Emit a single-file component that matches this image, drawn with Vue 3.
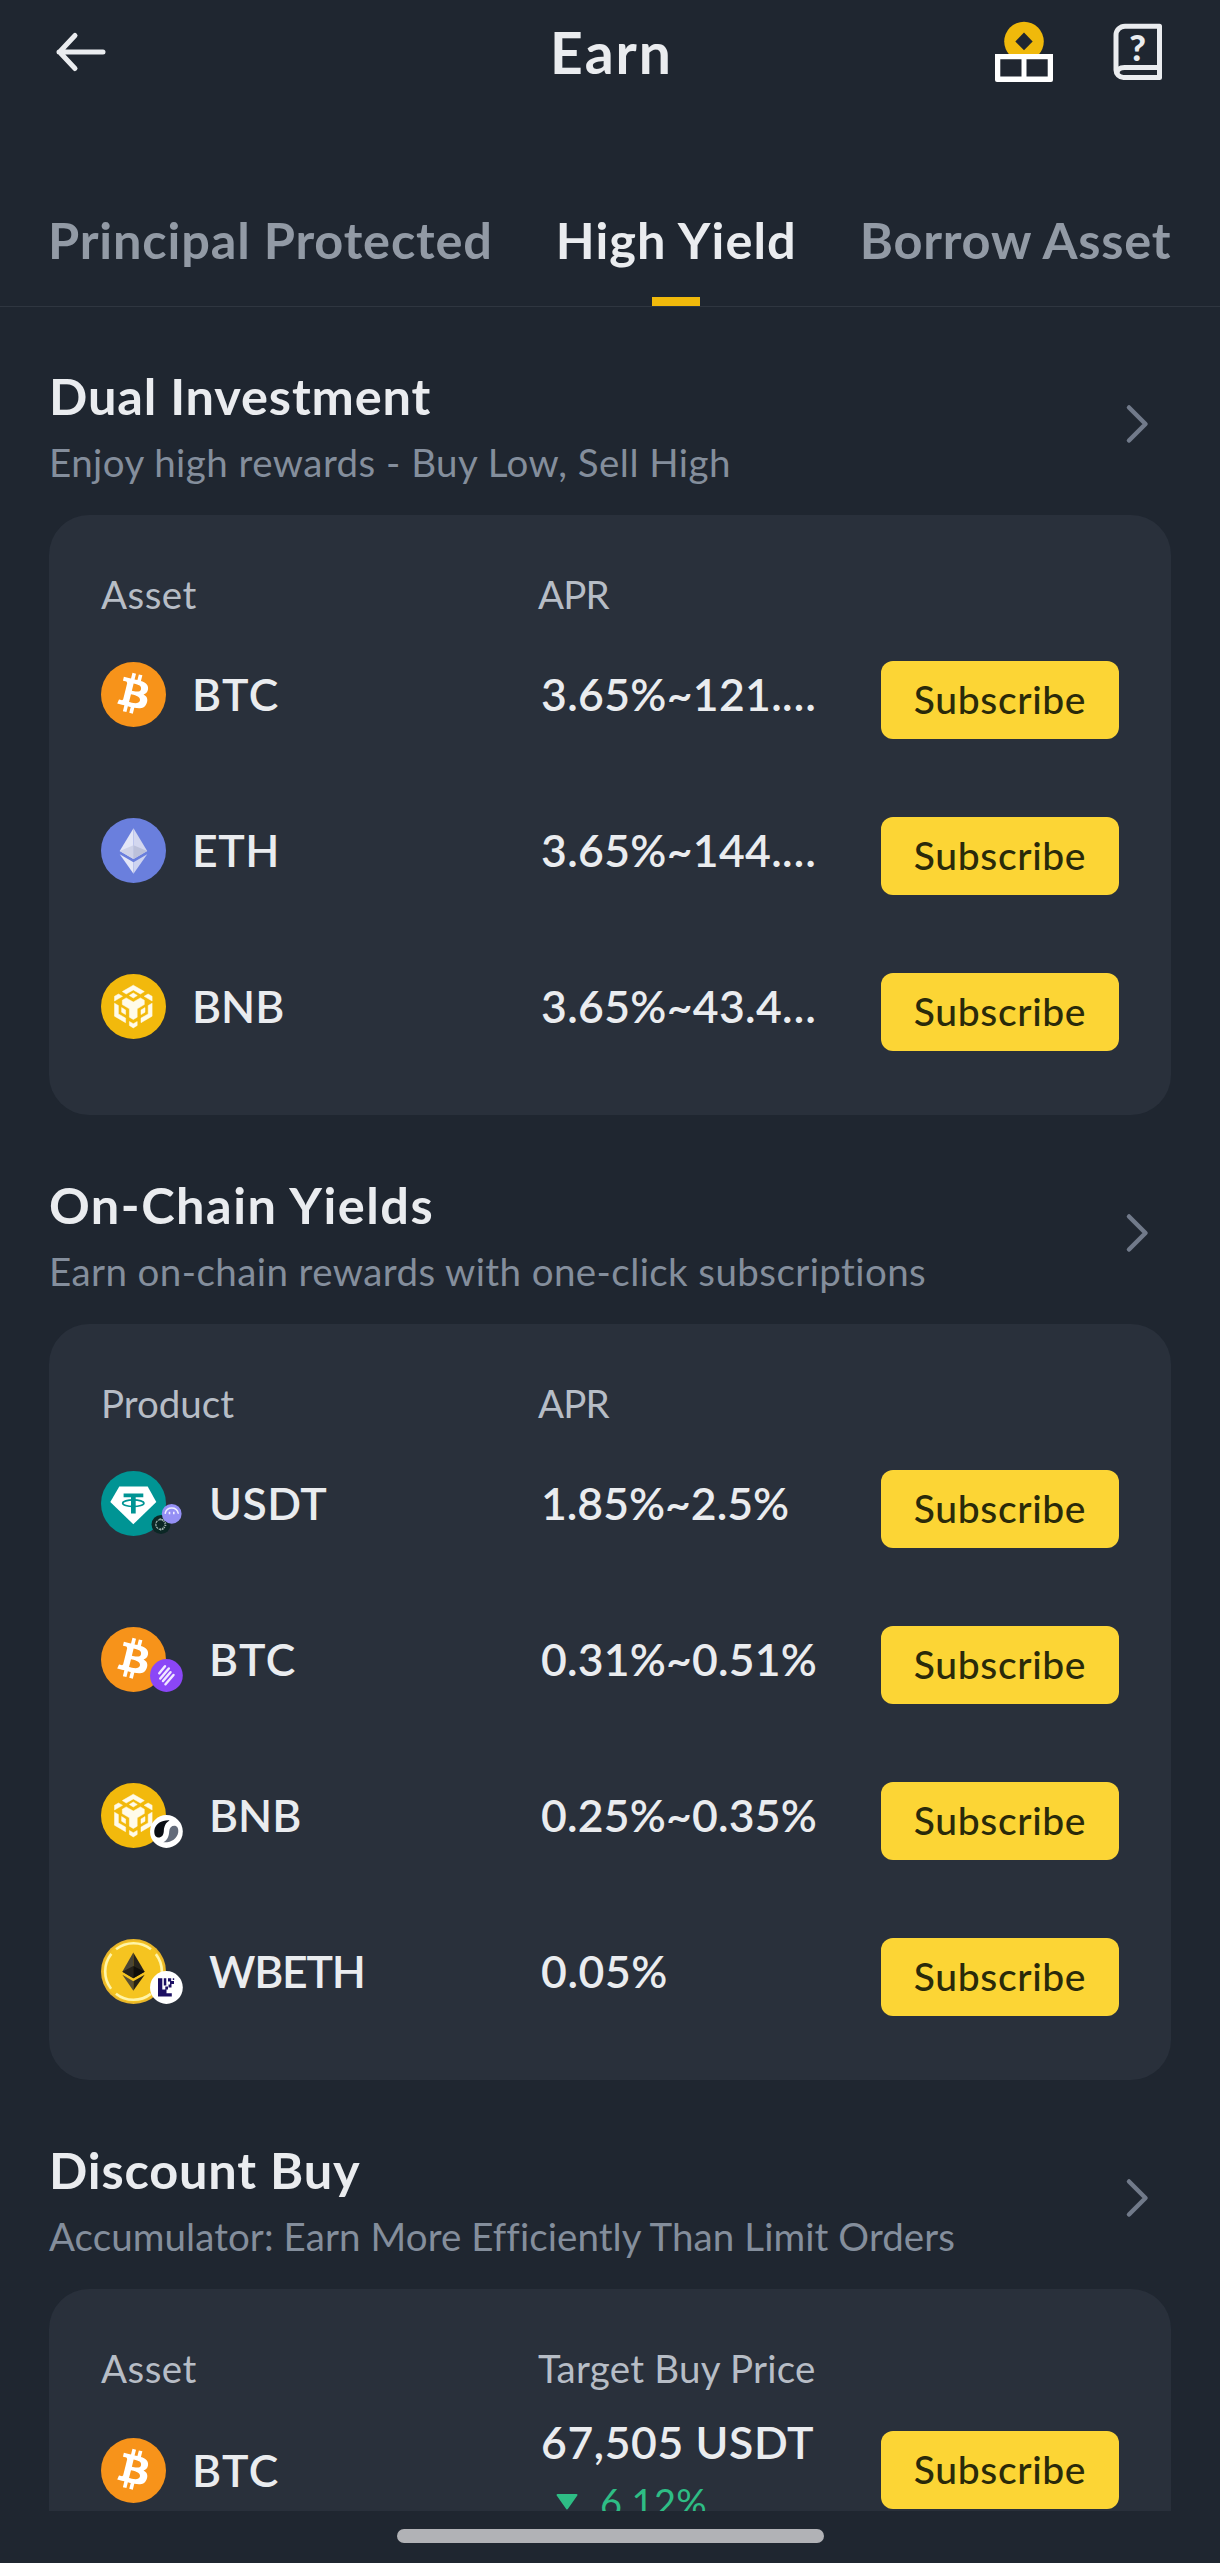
<script setup>
const tabs = [
  { label: 'Principal Protected', ls: 0.84 },
  { label: 'High Yield', ls: 1.04, active: true },
  { label: 'Borrow Asset', ls: 0.75 },
]

const sections = [
  {
    title: 'Dual Investment', ls: 0.84,
    sub: 'Enjoy high rewards - Buy Low, Sell High', subLs: 0.46,
    head: ['Asset', 'APR'], headLs: [0.47, -0.9],
    rows: [
      { icon: 'btc', name: 'BTC', nameLs: 1.5, value: '3.65%~121.…', ls: 0.33 },
      { icon: 'eth', name: 'ETH', nameLs: 0.5, value: '3.65%~144.…', ls: 0.33 },
      { icon: 'bnb', name: 'BNB', nameLs: 0, value: '3.65%~43.4…', ls: 0.33 },
    ],
  },
  {
    title: 'On-Chain Yields', ls: 1.5,
    sub: 'Earn on-chain rewards with one-click subscriptions', subLs: 0.42,
    head: ['Product', 'APR'], headLs: [0, -0.9], badged: true,
    rows: [
      { icon: 'usdt', name: 'USDT', nameLs: 0.5, value: '1.85%~2.5%', ls: 0 },
      { icon: 'btc', badge: 'solv', name: 'BTC', nameLs: 1.5, value: '0.31%~0.51%', ls: 0.2 },
      { icon: 'bnb', badge: 'lista', name: 'BNB', nameLs: 0, value: '0.25%~0.35%', ls: 0.2 },
      { icon: 'wbeth', badge: 'layer', name: 'WBETH', nameLs: -1.2, value: '0.05%', ls: 0.6 },
    ],
  },
  {
    title: 'Discount Buy', ls: 0.83,
    sub: 'Accumulator: Earn More Efficiently Than Limit Orders', subLs: 0.08,
    head: ['Asset', 'Target Buy Price'], headLs: [0.47, 0.24], tall: true,
    rows: [
      { icon: 'btc', name: 'BTC', nameLs: 1.5, value: '67,505 USDT', ls: 0.6, change: '6.12%' },
    ],
  },
]

const spacing = (v) => ({ letterSpacing: v + 'px' })
</script>

<template>
  <div class="screen">
    <header class="topbar">
      <svg class="back" width="54" height="44" viewBox="0 0 54 44">
        <path d="M50 22H6M22 5.500L6.500 22L22 38.500" />
      </svg>
      <h1>Earn</h1>
      <div class="actions">
        <svg width="58" height="62" viewBox="0 0 58 62">
          <circle cx="29" cy="20.500" r="19.800" fill="#f0b90b" />
          <path d="M29 11.500L37.700 20.500L29 29.300L20.300 20.500Z" fill="#202630" />
          <path d="M0 33H58V59a2 2 0 0 1-2 2H2a2 2 0 0 1-2-2Z" fill="#fff" />
          <path d="M5.300 38.300H26.500V55.500H5.300ZM31.500 38.300H52.700V55.500H31.500Z" fill="#202630" />
        </svg>
        <svg width="50" height="58" viewBox="0 0 50 58">
          <g fill="none" stroke="#eaecef" stroke-width="5" stroke-linejoin="round">
            <path d="M46.500 3.200H12a9 9 0 0 0-9 9V47a7.500 7.500 0 0 0 7.500 7.500H46.500Z" />
            <path d="M46.500 44.500H11.500Q4.500 44.500 4 50" />
          </g>
          <text x="24.500" y="37.500" text-anchor="middle">?</text>
        </svg>
      </div>
    </header>

    <nav class="tabs">
      <div v-for="t in tabs" :key="t.label" class="tab" :class="{ active: t.active }" :style="spacing(t.ls)">{{ t.label }}</div>
    </nav>

    <main class="content">
      <section v-for="s in sections" :key="s.title" class="section">
        <div class="section-head">
          <div>
            <h2 :style="spacing(s.ls)">{{ s.title }}</h2>
            <p :style="spacing(s.subLs)">{{ s.sub }}</p>
          </div>
          <svg class="chevron" width="26" height="42" viewBox="0 0 26 42">
            <path d="M4 4.500L20.500 21L4 37.500" />
          </svg>
        </div>

        <div class="card" :class="{ badged: s.badged, tall: s.tall }">
          <div class="row labels">
            <span :style="spacing(s.headLs[0])">{{ s.head[0] }}</span>
            <span :style="spacing(s.headLs[1])">{{ s.head[1] }}</span>
          </div>
          <div v-for="r in s.rows" :key="r.name" class="row item">
            <div class="asset">
              <svg class="coin" :width="s.badged ? 82 : 65" height="65" :viewBox="s.badged ? '0 0 82 65' : '0 0 65 65'">
                <template v-if="r.icon === 'btc'">
                  <circle cx="32.500" cy="32.500" r="32.500" fill="#f7931a" />
                  <path transform="translate(-.5 -1.500) scale(2.050)" fill="#fff" d="M23.189 14.02c.314-2.096-1.283-3.223-3.465-3.975l.708-2.84-1.728-.43-.69 2.765c-.454-.114-.92-.22-1.385-.326l.695-2.783L15.596 6l-.708 2.839c-.376-.086-.746-.17-1.104-.26l.002-.009-2.384-.595-.46 1.846s1.283.294 1.256.312c.7.175.826.638.805 1.006l-.806 3.235c.048.012.11.03.18.057l-.183-.045-1.13 4.532c-.086.212-.303.531-.793.41.018.025-1.256-.313-1.256-.313l-.858 1.978 2.25.561c.418.105.828.215 1.231.318l-.715 2.872 1.727.43.708-2.84c.472.127.93.245 1.378.357l-.706 2.828 1.728.43.715-2.866c2.948.558 5.164.333 6.097-2.333.752-2.146-.037-3.385-1.588-4.192 1.13-.26 1.98-1.003 2.207-2.538zm-3.95 5.538c-.533 2.147-4.148.986-5.32.695l.95-3.805c1.172.293 4.929.872 4.37 3.11zm.535-5.569c-.487 1.953-3.495.96-4.47.717l.86-3.45c.975.243 4.118.696 3.61 2.733z" />
                </template>
                <template v-else-if="r.icon === 'eth'">
                  <circle cx="32.500" cy="32.500" r="32.500" fill="#6a7fdd" />
                  <path d="M32.500 10.300L18.700 33L32.500 41Z" fill="#e3e6f7" />
                  <path d="M32.500 10.300L46.200 33L32.500 41Z" fill="#d3d7ef" />
                  <path d="M32.500 27.200L18.700 33L32.500 41Z" fill="#ced2e8" />
                  <path d="M32.500 27.200L46.200 33L32.500 41Z" fill="#bcc1da" />
                  <path d="M18.700 36.300L32.500 44.300V55.700Z" fill="#e3e6f7" />
                  <path d="M46.200 36.300L32.500 44.300V55.700Z" fill="#cdd3f0" />
                </template>
                <template v-else-if="r.icon === 'bnb'">
                  <circle cx="32.500" cy="32.500" r="32.500" fill="#f2b90c" />
                  <g fill="#fffbea" stroke="#fffbea" stroke-width=".5">
                    <path d="M32.300 11.200L43.300 17.600L39.400 20L32.300 15.900L25.200 20L21.300 17.600Z" />
                    <path d="M32.300 19L36.300 21.500L32.300 24L28.300 21.500Z" />
                    <path d="M13.500 27V22.300L17.500 20L21.500 22.300Z" />
                    <path d="M51.100 27V22.300L47.100 20L43.100 22.300Z" />
                    <path d="M21.300 26.200L25.200 23.900L32.300 28L39.400 23.900L43.300 26.200V30.600L36.200 34.800V43.200L32.300 45.500L28.400 43.200V34.800L21.300 30.600Z" />
                    <path d="M13.500 29.200L17.400 31.500V39.900L24.600 44.100V48.700L13.500 42.200Z" />
                    <path d="M51.100 29.200L47.200 31.500V39.900L40 44.100V48.700L51.100 42.200Z" />
                    <path d="M20.600 33.600L24.600 36V40.600L20.600 38.200Z" />
                    <path d="M44 33.600L40 36V40.600L44 38.200Z" />
                    <path d="M28.400 47.500L32.300 49.700L36.200 47.500V51.500L32.300 53.900L28.400 51.500Z" />
                  </g>
                </template>
                <template v-else-if="r.icon === 'usdt'">
                  <circle cx="32.500" cy="32.500" r="32.500" fill="#009494" />
                  <path d="M18.300 15.500H46.700L55.300 30.900L32.300 53.200L9.300 30.900Z" fill="#fff" />
                  <path d="M22.600 22.400H42.300V26.200H34.700V42.400H30V26.200H22.600Z" fill="#009494" />
                  <ellipse cx="32.300" cy="32.200" rx="10.600" ry="3.300" fill="none" stroke="#009494" stroke-width="1.700" />
                  <circle cx="60" cy="53.500" r="9.500" fill="#0b2725" />
                  <path d="M62.500 49.200A5 5 0 1 0 62.500 57.700" fill="none" stroke="#9db0ac" stroke-width="1.200" stroke-dasharray="2.500 .7" />
                  <path d="M58.500 48.300Q64 49 64.500 53.300Q64 57.500 58.500 58.700" fill="none" stroke="#9db0ac" stroke-width="2" stroke-dasharray="1.200 1" />
                  <circle cx="70.700" cy="42.800" r="9.900" fill="#9590f5" />
                  <path d="M64.200 42.200Q65.500 37 70.700 37Q76 37 77.200 42.200" fill="none" stroke="#f0efff" stroke-width="1.500" stroke-linecap="round" />
                  <path d="M68.500 40.800V43.300M72.800 40.800V43.300" stroke="#f0efff" stroke-width="1.600" />
                </template>
                <template v-else>
                  <circle cx="32.500" cy="32.500" r="32.500" fill="#e9b62a" />
                  <circle cx="32.500" cy="32.500" r="30.500" fill="#f5c420" />
                  <circle cx="32.500" cy="32.500" r="28.300" fill="none" stroke="#fff4a8" stroke-width="2.600" stroke-dasharray="37.500 6.950" transform="rotate(-38 32.500 32.500) rotate(-90 32.500 32.500)" />
                  <path d="M32.300 13.600L21.300 32.700L32.300 39.300Z" fill="#4a4535" />
                  <path d="M32.300 13.600L43.700 32.700L32.300 39.300Z" fill="#26231b" />
                  <path d="M32.300 27L21.300 32.700L32.300 39.300Z" fill="#25221a" />
                  <path d="M32.300 27L43.700 32.700L32.300 39.300Z" fill="#0f0e0b" />
                  <path d="M21.300 35.700L32.300 42.300V51.700Z" fill="#5a5032" />
                  <path d="M43.700 35.700L32.300 42.300V51.700Z" fill="#272214" />
                </template>

                <template v-if="r.badge === 'solv'">
                  <circle cx="65.400" cy="48.500" r="16.400" fill="#8b46f7" />
                  <g stroke="#f1e8ff" stroke-width="2.500" stroke-linecap="round">
                    <path d="M58.300 46.300L64 39.300M59.300 51.500L67.800 41.500M62 54L69.500 45.200M64.500 57.300L72.500 48" />
                  </g>
                </template>
                <template v-else-if="r.badge === 'lista'">
                  <circle cx="65.400" cy="48.500" r="16.400" fill="#fff" />
                  <path d="M68.500 37.400C61 37 54.500 40.500 53.300 47.500C53 51.500 54.500 54.200 57 54.500C60.500 54.700 62.500 52.500 62.800 48.500C63 43.500 64.500 39.500 68.500 37.400Z" fill="#0b0e14" />
                  <path d="M62.300 59.300C70 59.800 76 56 77.200 49.500C77.700 45.500 76.300 43 74 42.700C70.500 42.500 68.500 44.500 68.200 48.500C68 53.500 66.300 57.300 62.300 59.300Z" fill="#636b7a" />
                </template>
                <template v-else-if="r.badge === 'layer'">
                  <circle cx="65.400" cy="48.500" r="16.400" fill="#fff" />
                  <path d="M57 39.300H61.300V50.500H64.300V47.500H67V50.500H65.500V54.300H70.800V57.600H57ZM62.800 39.300H65.300V46.500H62.800ZM67 39.300H70.200V42H73V45H70.500V48.500H67.500V45.500H69V42.500H67ZM71.800 39.300H73.200V41H71.800Z" fill="#1c0f63" />
                </template>
              </svg>
              <span class="name" :style="spacing(r.nameLs)">{{ r.name }}</span>
            </div>
            <div class="value">
              <div :style="spacing(r.ls)">{{ r.value }}</div>
              <div v-if="r.change" class="change">
                <svg width="22" height="16" viewBox="0 0 22 16"><path d="M1.500 1H20.500L11 14.500Z" /></svg>
                <span>{{ r.change }}</span>
              </div>
            </div>
            <button type="button">Subscribe</button>
          </div>
        </div>
      </section>
    </main>

    <footer class="homebar"><i></i></footer>
  </div>
</template>

<style>
body { margin: 0; background: #1f2630; }
</style>

<style scoped>
.screen {
  width: 1220px;
  height: 2563px;
  display: flex;
  flex-direction: column;
  overflow: hidden;
  background: #1f2630;
  color: #eaecef;
  font-family: Lato, "Open Sans", sans-serif;
  font-kerning: normal;
}
.topbar {
  flex: none;
  height: 104px;
  display: grid;
  grid-template-columns: 1fr auto 1fr;
  align-items: center;
}
.back { margin-left: 53px; }
.back path, .chevron path {
  fill: none;
  stroke: #eaecef;
  stroke-width: 5;
  stroke-linecap: round;
  stroke-linejoin: round;
}
h1 {
  margin: 0 0 0 3px;
  font-size: 57px;
  line-height: 68px;
  font-weight: 700;
  letter-spacing: 2px;
}
.actions {
  display: flex;
  justify-content: flex-end;
  align-items: center;
  gap: 60px;
  margin-right: 57px;
}
.actions svg:first-child { margin-bottom: 1px; }
.actions text {
  font: 900 36px Lato, sans-serif;
  fill: #eaecef;
}
.tabs {
  flex: none;
  display: flex;
  gap: 63px;
  height: 202px;
  padding-left: 48px;
  border-bottom: 1px solid #2f3640;
  white-space: nowrap;
  overflow: hidden;
}
.tab {
  position: relative;
  padding-top: 106px;
  font-size: 50.500px;
  line-height: 60px;
  font-weight: 700;
  color: #929aa5;
}
.tab.active { color: #eaecef; }
.tab.active::after {
  content: "";
  position: absolute;
  left: 50%;
  bottom: 0;
  width: 48px;
  height: 9px;
  margin-left: -24px;
  background: #f0b90b;
}
.content {
  flex: 1;
  min-height: 0;
  overflow: hidden;
  padding: 59px 49px 0;
}
.section { margin-bottom: 60px; }
.section-head {
  display: flex;
  justify-content: space-between;
  height: 149px;
}
h2 {
  margin: 0 0 14px;
  font-size: 50.500px;
  line-height: 60px;
  font-weight: 700;
}
p {
  margin: 0;
  font-size: 38.500px;
  line-height: 44px;
  color: #848e9c;
  white-space: nowrap;
}
.chevron { margin: 37px 20px 0 0; }
.chevron path { stroke: #717a8a; stroke-width: 4.500; }
.card {
  padding: 57px 52px 31px;
  border-radius: 40px;
  background: #29303b;
}
.row {
  display: grid;
  grid-template-columns: 437px 1fr 238px;
  align-items: center;
}
.labels {
  font-size: 38.500px;
  line-height: 44px;
  color: #b7bdc6;
  white-space: nowrap;
}
.item { height: 156px; }
.tall .item { height: 160px; }
.asset { display: flex; align-items: center; gap: 26px; }
.coin { flex: none; }
.name, .value {
  font-size: 44.500px;
  line-height: 56px;
  font-weight: 600;
  white-space: nowrap;
}
.value { padding-left: 3px; }
.change {
  display: flex;
  align-items: flex-start;
  padding: 8px 0 0 15px;
  gap: 22px;
  font-size: 38px;
  line-height: 48px;
  font-weight: 400;
  letter-spacing: 0.300px;
  color: #2ebd85;
}
.change svg { margin-top: 16px; fill: #2ebd85; stroke: #2ebd85; stroke-width: 2; stroke-linejoin: round; }
button {
  height: 78px;
  margin: 12px 0 0;
  padding: 0 0 3px;
  border: 0;
  border-radius: 12px;
  background: #fcd535;
  color: #2a2a0a;
  font-family: inherit;
  font-size: 39px;
  font-weight: 500;
  letter-spacing: 0.650px;
}
.tall button { margin-top: 0; }
.homebar {
  flex: none;
  height: 52px;
  display: flex;
  justify-content: center;
}
.homebar i {
  width: 427px;
  height: 14px;
  margin-top: 18px;
  border-radius: 7px;
  background: #b1b2b6;
}
</style>
